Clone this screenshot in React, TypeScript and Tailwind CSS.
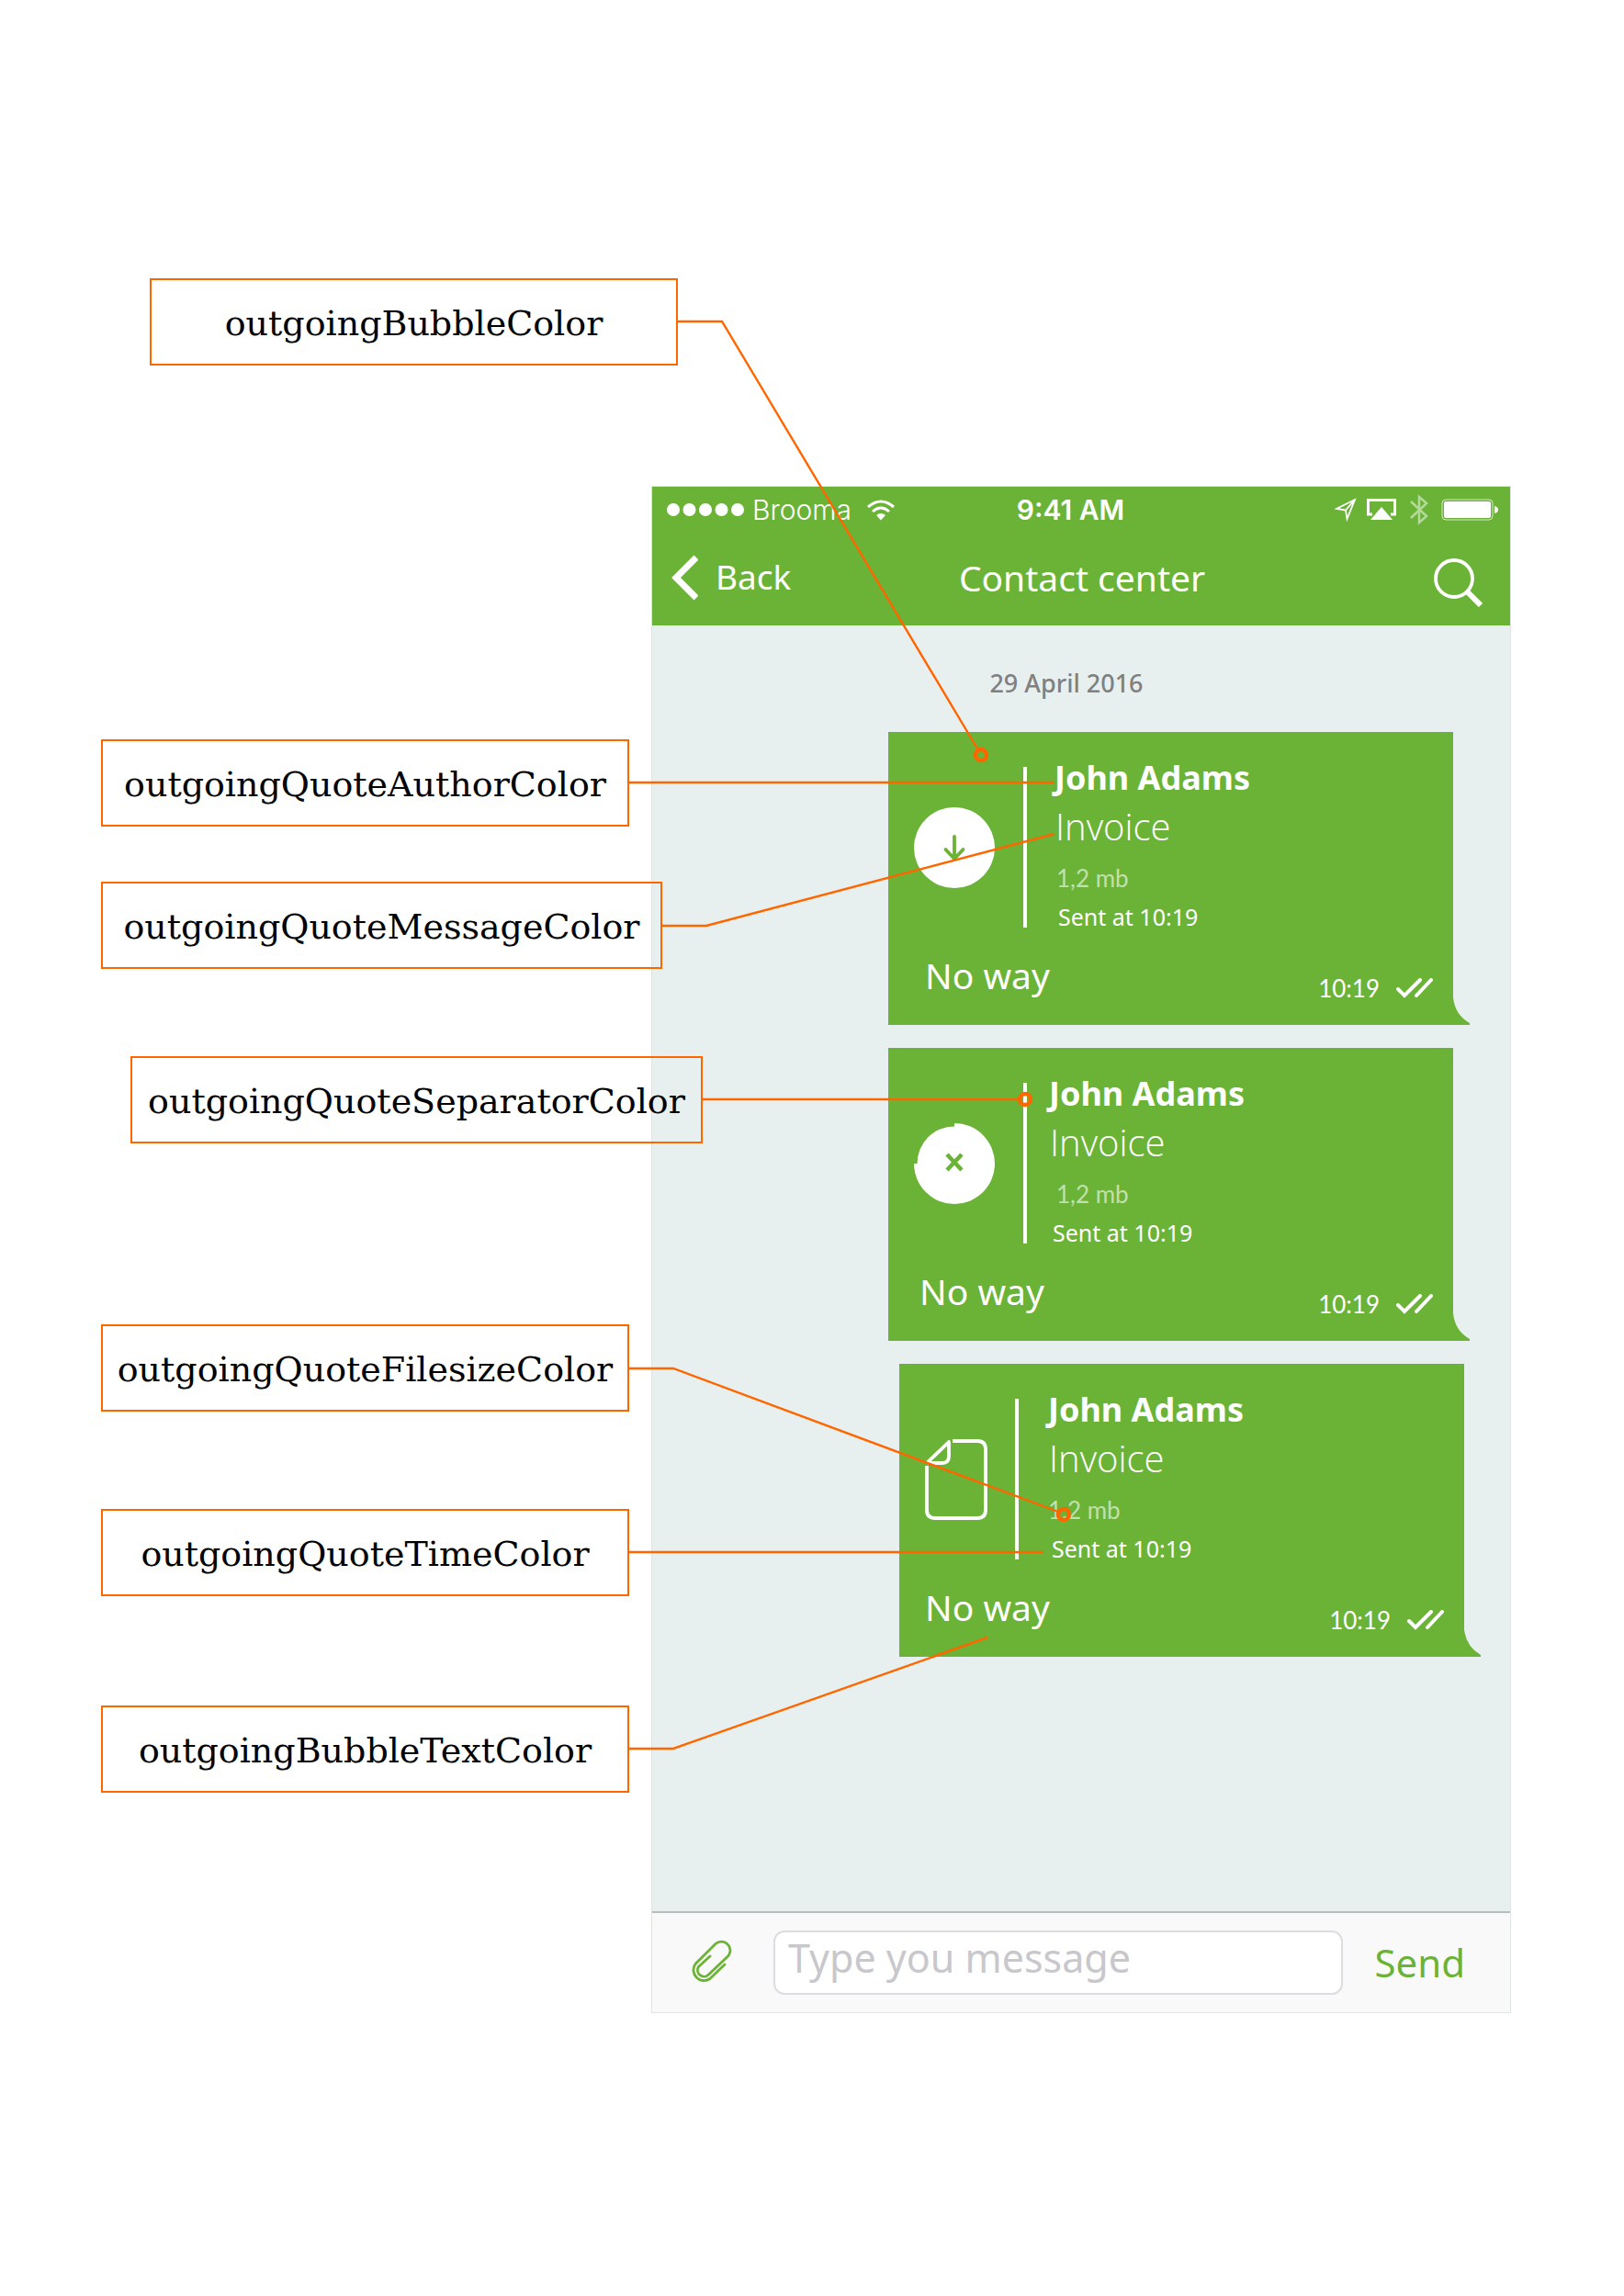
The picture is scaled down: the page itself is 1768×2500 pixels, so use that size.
import React from "react";

const ORANGE = "#ff6600";

type Status = "download" | "loading" | "file";

function StatusIcon({ kind }: { kind: Status }) {
  if (kind === "file") {
    return (
      <svg width="68" height="88" viewBox="0 0 68 88" fill="none" stroke="#fff" strokeWidth="3.800" strokeLinejoin="round">
        <path d="M30 2H57Q66 2 66 11V77Q66 86 57 86H11Q2 86 2 77V29" />
        <path d="M3 25L26 3V19Q26 26 19 26H4Z" />
      </svg>
    );
  }
  return (
    <svg width="88" height="88" viewBox="0 0 88 88" fill="none">
      {kind === "download" ? (
        <>
          <circle cx="44" cy="44" r="44" fill="#fff" />
          <path d="M44 32V55M34.500 46L44 56L53.500 46" stroke="#6bb336" strokeWidth="3.800" strokeLinecap="round" />
        </>
      ) : (
        <>
          <circle cx="44" cy="44" r="40.500" fill="#fff" />
          <path d="M44 0A44 44 0 1 1 0 44H44Z" fill="#fff" />
          <path d="M36 34L52 51M52 34L36 51" stroke="#6bb336" strokeWidth="4.500" />
        </>
      )}
    </svg>
  );
}

function Bubble({ kind }: { kind: Status }) {
  const spacing = {
    download: { outer: "mr-[62px]", icon: "w-[147px]", quote: "pl-[30px]", size: "pl-0.5", body: "pl-10" },
    loading: { outer: "mr-[62px]", icon: "w-[147px]", quote: "pl-6", size: "pl-2", body: "pl-[34px]" },
    file: { outer: "mr-[50px]", icon: "w-[126px]", quote: "pl-8", size: "pl-0", body: "pl-7" },
  }[kind];
  return (
    <article className={`relative flex h-[319px] w-[615px] flex-col bg-[#6bb336] text-white ${spacing.outer}`}>
      <div className="flex pt-[38px]">
        <div className={`flex h-[175px] items-center pl-7 ${spacing.icon}`}>
          <StatusIcon kind={kind} />
        </div>
        <div className="h-[175px] w-1 bg-white" />
        <div className={`h-[175px] ${spacing.quote}`}>
          <h3 className="-mt-[13px] text-[36px] leading-[50px] font-bold">John Adams</h3>
          <p className="pl-px font-['Open_Sans',sans-serif] text-[40px] leading-[56px] font-light">Invoice</p>
          <p className={`mt-1 font-[Lato,sans-serif] text-[26px] leading-[48px] text-white/60 ${spacing.size}`}>1,2 mb</p>
          <p className="pl-1 text-[25px] leading-[36px]">Sent at 10:19</p>
        </div>
      </div>
      <div className={`flex flex-1 items-start justify-between pr-[22px] ${spacing.body}`}>
        <p className="pt-[26px] text-[39px] leading-[52px]">No way</p>
        <div className="flex items-center gap-[18px] pt-[46px]">
          <time className="font-[Lato,sans-serif] text-[26px] leading-[40px]">10:19</time>
          <svg width="40" height="22" viewBox="0 0 40 22" fill="none" stroke="#fff" strokeWidth="4" strokeLinecap="round">
            <path d="M2 12L9 19L26 2M22 19L38 2" />
          </svg>
        </div>
      </div>
      <svg className="absolute bottom-0 left-full" width="18" height="30" viewBox="0 0 18 30" fill="#6bb336">
        <path d="M0 0Q2 19 18 28V30H0Z" />
      </svg>
    </article>
  );
}

function StatusBar() {
  return (
    <div className="flex h-[50px] items-center pr-[13px] pl-4 font-[Inter,sans-serif] text-[30px] leading-none">
      <div className="flex flex-1 items-center">
        <svg width="84" height="14" viewBox="0 0 84 14" fill="#fff">
          <circle cx="7" cy="7" r="7" />
          <circle cx="24.500" cy="7" r="7" />
          <circle cx="42" cy="7" r="7" />
          <circle cx="59.500" cy="7" r="7" />
          <circle cx="77" cy="7" r="7" />
        </svg>
        <span className="ml-[9px] font-light">Brooma</span>
        <svg className="ml-[17px]" width="30" height="23" viewBox="0 0 30 23" fill="none" stroke="#fff" strokeWidth="3">
          <path d="M1 8Q15 -4 29 8" />
          <path d="M6 13Q15 5 24 13" />
          <path d="M10 17Q15 13 20 17L15 22.500Z" fill="#fff" stroke="none" />
        </svg>
      </div>
      <span className="mr-[26px] font-semibold">9:41 AM</span>
      <div className="flex flex-1 items-center justify-end">
        <svg width="24" height="26" viewBox="0 0 24 26" fill="none" stroke="#fff" strokeWidth="1.800">
          <path d="M22 2L2 12L12 13.500L13.500 23Z M22 2L12 13.500" />
        </svg>
        <svg className="ml-[11px]" width="32" height="24" viewBox="0 0 32 24" fill="none">
          <path d="M6 17H1.500V1.500H30.500V17H26" stroke="#fff" strokeWidth="3" />
          <path d="M16 9L28 23H4Z" fill="#fff" />
        </svg>
        <svg className="ml-[15px] opacity-50" width="20" height="34" viewBox="0 0 20 34" fill="none" stroke="#fff" strokeWidth="2.500">
          <path d="M1 8L18 24L10 31V3L18 10L1 26" />
        </svg>
        <svg className="ml-[14px]" width="62" height="24" viewBox="0 0 62 24" fill="none">
          <rect x="1" y="1" width="55" height="22" rx="4" stroke="#fff" strokeOpacity=".7" />
          <rect x="3" y="3" width="51" height="18" rx="2" fill="#fff" />
          <path d="M58 8Q62 9 62 12T58 16Z" fill="#fff" />
        </svg>
      </div>
    </div>
  );
}

function Phone() {
  return (
    <main className="flex w-full max-w-[936px] flex-col border border-[#e0e4e4] bg-[#e8f0ef]">
      <header className="bg-[#6bb336] text-white">
        <StatusBar />
        <div className="flex h-[101px] items-start justify-between pr-[30px] pl-5">
          <button className="flex w-[180px] items-center gap-[19px] pt-[23px]">
            <svg width="30" height="52" viewBox="0 0 30 52" fill="none" stroke="#fff" strokeWidth="7">
              <path d="M28 4L6 26L28 48" />
            </svg>
            <span className="pb-0.5 text-[37px] leading-[50px]">Back</span>
          </button>
          <h1 className="pt-[23px] text-[39px] leading-[52px]">Contact center</h1>
          <button className="flex w-[168px] justify-end pt-[28px]" aria-label="Search">
            <svg width="53" height="53" viewBox="0 0 53 53" fill="none" stroke="#fff">
              <circle cx="22" cy="22" r="20" strokeWidth="3.800" />
              <path d="M36 36L51 51" strokeWidth="6" />
            </svg>
          </button>
        </div>
      </header>
      <section className="flex min-h-[1400px] flex-col items-end gap-[25px]">
        <p className="mt-[44px] mb-[9px] w-full pr-8 text-center text-[27px] leading-[38px] font-medium text-[#808080]">29 April 2016</p>
        <Bubble kind="download" />
        <Bubble kind="loading" />
        <Bubble kind="file" />
      </section>
      <form
        className="flex h-[110px] items-center border-t-2 border-[#b9bcbf] bg-[#f9f9f9] pr-[49px] pb-px pl-[42px]"
        onSubmit={(e) => e.preventDefault()}
      >
        <button type="button" aria-label="Attach file">
          <svg width="46" height="50" viewBox="0 0 46 50" fill="none" stroke="#6bb336" strokeWidth="2.800" strokeLinecap="round">
            <path d="M37 27L21 42.500A11.500 11.500 0 0 1 5 26.500L27 4.500A9.600 9.600 0 0 1 41 17.500L19.500 38A7 7 0 0 1 8.500 29.500L21 18" />
          </svg>
        </button>
        <input
          aria-label="Message"
          placeholder="Type you message"
          className="ml-[44px] h-[70px] min-w-0 flex-1 rounded-xl border-2 border-[#dcdde0] bg-white px-[14px] pb-2.5 text-[43px] placeholder:text-[#c8c7cc]"
        />
        <button type="submit" className="ml-[34px] text-[42px] leading-[56px] text-[#6bb336]">
          Send
        </button>
      </form>
    </main>
  );
}

const callouts = [
  { text: "outgoingBubbleColor", place: "left-[163px] top-[303px] w-[575px]" },
  { text: "outgoingQuoteAuthorColor", place: "left-[110px] top-[805px] w-[575px]" },
  { text: "outgoingQuoteMessageColor", place: "left-[110px] top-[960px] w-[611px]" },
  { text: "outgoingQuoteSeparatorColor", place: "left-[142px] top-[1150px] w-[623px]" },
  { text: "outgoingQuoteFilesizeColor", place: "left-[110px] top-[1442px] w-[575px]" },
  { text: "outgoingQuoteTimeColor", place: "left-[110px] top-[1643px] w-[575px]" },
  { text: "outgoingBubbleTextColor", place: "left-[110px] top-[1857px] w-[575px]" },
];

export default function App() {
  return (
    <div className="relative min-h-screen bg-white pt-[529px] pr-[123px] pb-[308px] pl-[709px] font-['Noto_Sans',sans-serif]">
      <Phone />
      {callouts.map((c) => (
        <div
          key={c.text}
          className={`absolute flex h-[95px] items-center justify-center border-2 border-[#ff6600] pt-1 font-['DejaVu_Serif',serif] text-[38px] text-black ${c.place}`}
        >
          {c.text}
        </div>
      ))}
      <svg
        className="pointer-events-none absolute top-0 left-0"
        width="1240"
        height="2000"
        viewBox="0 0 1240 2000"
        fill="none"
        stroke={ORANGE}
        strokeWidth="2.400"
      >
        <path d="M738 350H786L1064 815" />
        <path d="M685 852H1148" />
        <path d="M721 1008H769L1148 908" />
        <path d="M765 1197H1109" />
        <path d="M685 1490H733L1152 1646" />
        <path d="M685 1690H1136" />
        <path d="M685 1904H733L1075 1783" />
        <g strokeWidth="4.500">
          <circle cx="1068" cy="822" r="6" />
          <circle cx="1116" cy="1197" r="6" />
          <circle cx="1158" cy="1649" r="6" />
        </g>
      </svg>
    </div>
  );
}
